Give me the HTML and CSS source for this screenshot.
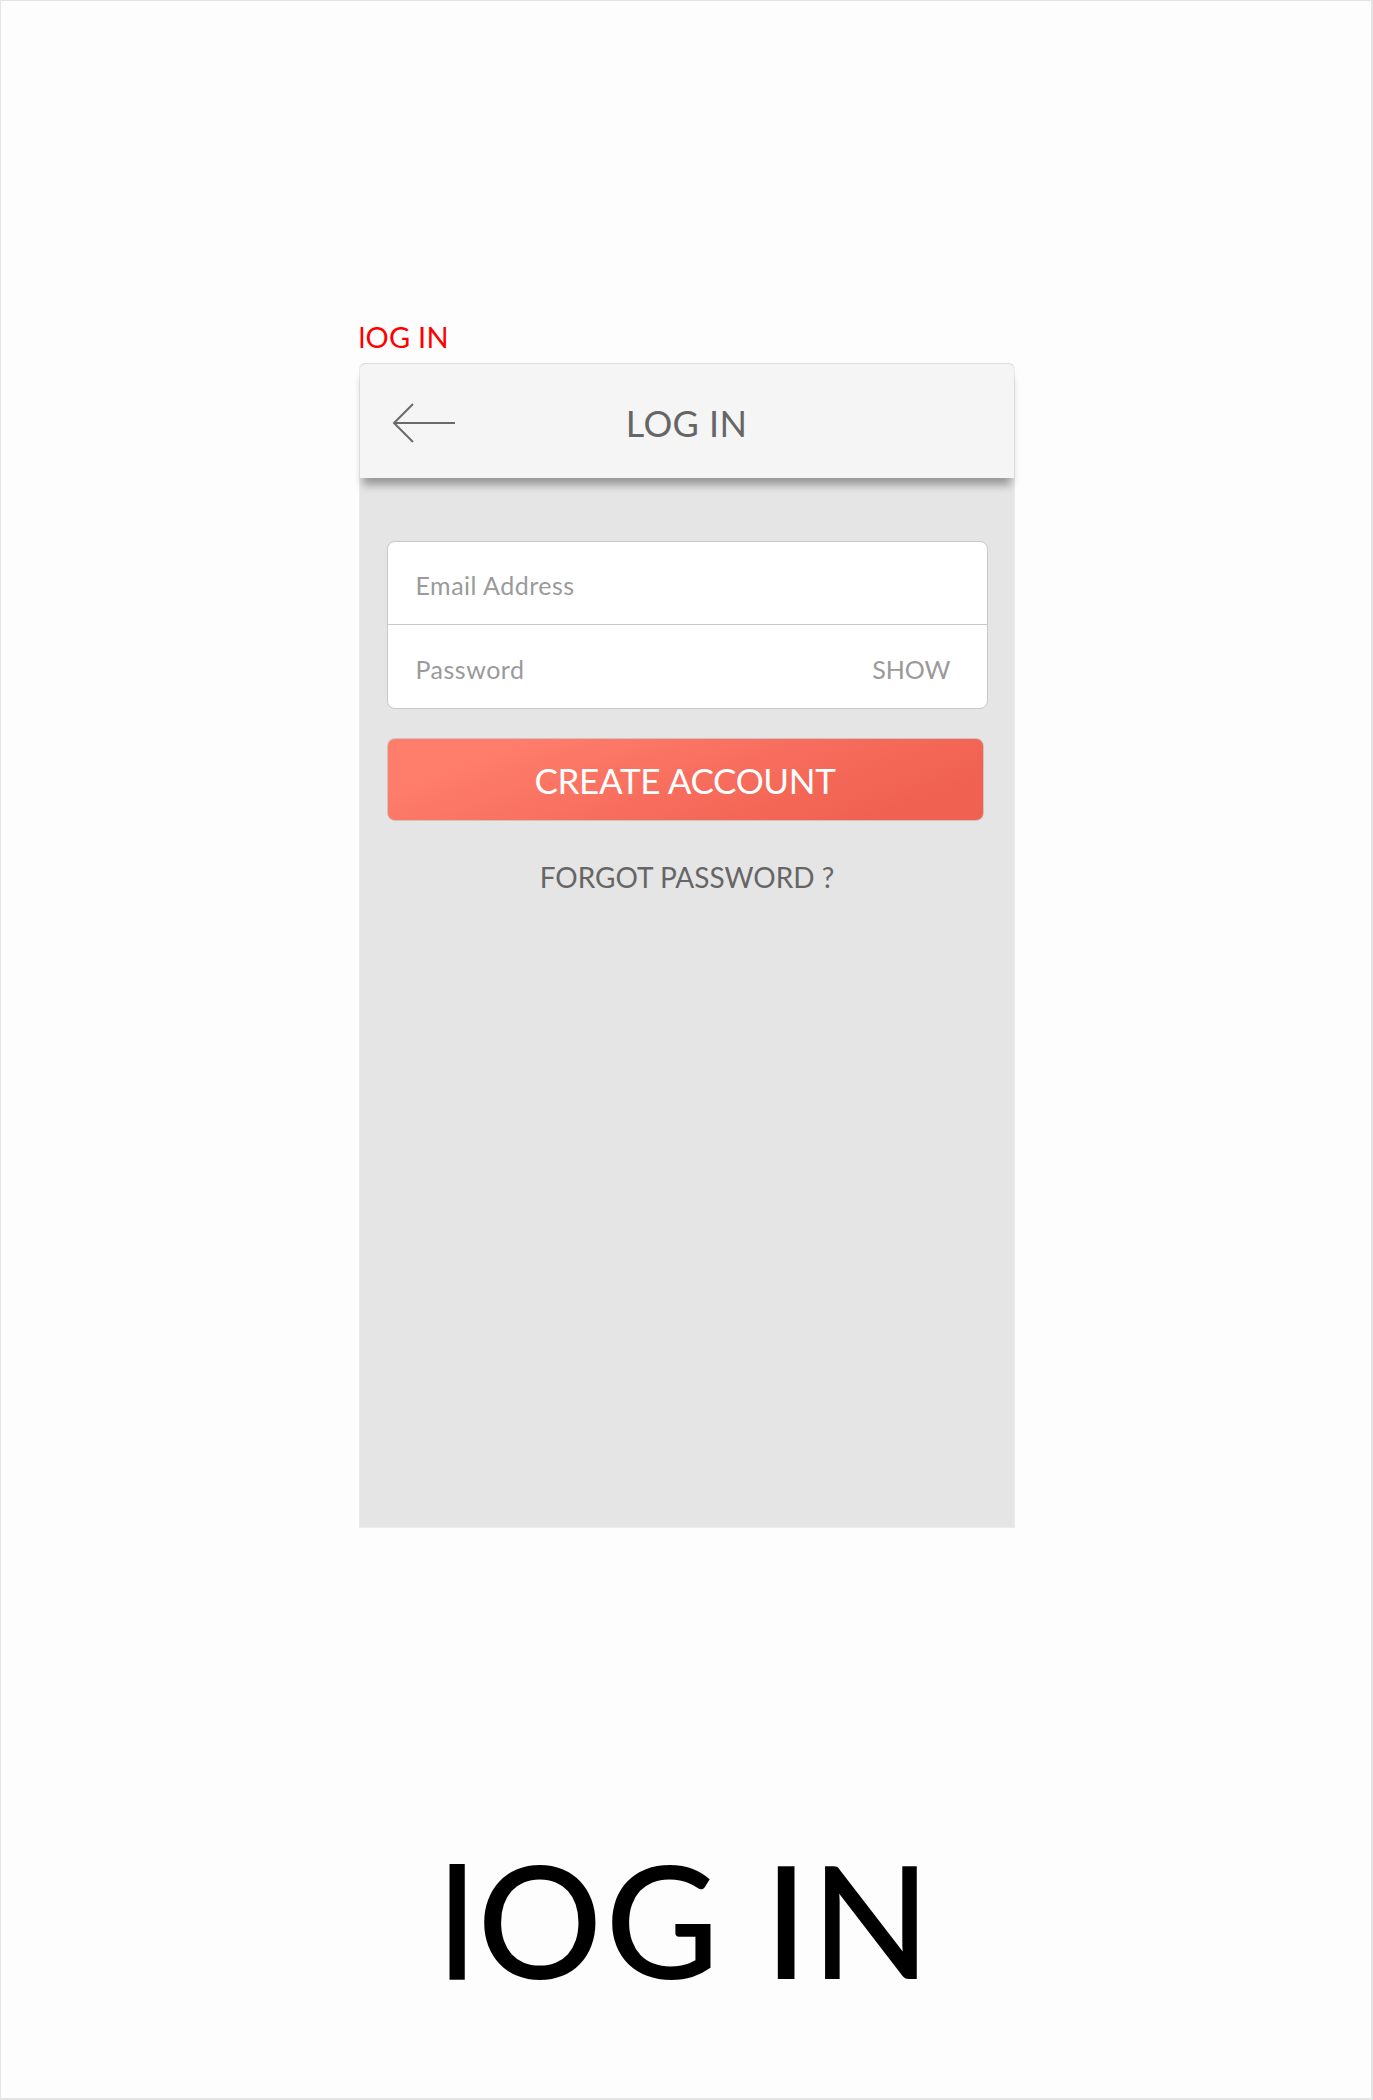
FILE: index.html
```html
<!DOCTYPE html>
<html lang="en">
<head>
<meta charset="utf-8">
<title>Log In</title>
<link rel="stylesheet" href="styles.css">
</head>
<body>
<div class="frame">
  <div class="screen-wrap">
    <div class="screen-label">lOG IN</div>
    <div class="card">
      <div class="topbar">
        <div class="back">
          <svg width="66" height="42" viewBox="0 0 66 42" aria-hidden="true">
            <path d="M2 21 H63" stroke="#6a6a6a" stroke-width="2" fill="none"/>
            <path d="M21 2 L2 21 L21 40" stroke="#6a6a6a" stroke-width="2" fill="none" stroke-linejoin="miter"/>
          </svg>
        </div>
        <div class="title">LOG IN</div>
        <div class="spacer"></div>
      </div>
      <div class="content">
        <div class="fields">
          <div class="field">Email Address</div>
          <div class="field field-pass"><span>Password</span><span class="show">SHOW</span></div>
        </div>
        <div class="cta">CREATE ACCOUNT</div>
        <div class="forgot">FORGOT PASSWORD ?</div>
      </div>
    </div>
  </div>
  <div class="big-title">lOG IN</div>
</div>
</body>
</html>
```
FILE: styles.css
```css
html, body {
  margin: 0;
  padding: 0;
  background: #ffffff;
}
body {
  font-family: Lato, "Open Sans", sans-serif;
}
.frame {
  width: 1373px;
  height: 2100px;
  box-sizing: border-box;
  border: 1px solid #e4e4e4;
  border-right-width: 2px;
  border-bottom-width: 2px;
  background: #fdfdfd;
  display: flex;
  flex-direction: column;
  align-items: center;
}
.screen-wrap {
  width: 656px;
  margin-top: 321px;
  margin-left: 1px;
}
.screen-label {
  color: #ff0000;
  font-size: 29px;
  line-height: 29px;
  height: 29px;
  margin-bottom: 12px;
  letter-spacing: 0.3px;
}
.card {
  height: 1165px;
  box-sizing: border-box;
  background: #e5e5e5;
  border: 1px solid #ebebeb;
  border-top-color: #dedede;
  border-radius: 6px 6px 0 0;
  display: flex;
  flex-direction: column;
}
.topbar {
  height: 114px;
  flex: none;
  background: #f5f5f5;
  border-radius: 6px 6px 0 0;
  display: grid;
  grid-template-columns: 1fr auto 1fr;
  align-items: center;
  position: relative;
  z-index: 1;
  box-shadow: 0 10px 8px -3px rgba(0, 0, 0, 0.34);
}
.back {
  padding-left: 32px;
  padding-top: 4px;
  display: flex;
}
.title {
  color: #666666;
  font-size: 36px;
  line-height: 36px;
  padding-top: 4px;
  letter-spacing: 0.4px;
}
.content {
  flex: 1;
  padding: 63px 26px 0 27px;
  display: flex;
  flex-direction: column;
}
.fields {
  background: #ffffff;
  border: 1px solid #c9c9c9;
  border-radius: 8px;
  height: 168px;
  box-sizing: border-box;
  display: flex;
  flex-direction: column;
}
.field {
  flex: 1;
  display: flex;
  align-items: center;
  justify-content: space-between;
  padding: 5px 36px 0 28px;
  color: #9a9a9a;
  font-size: 25px;
  line-height: 25px;
  letter-spacing: 0.5px;
}
.field + .field {
  border-top: 1px solid #c9c9c9;
  padding-top: 6px;
}
.show {
  color: #9a9a9a;
  letter-spacing: 0;
}
.cta {
  margin-top: 29px;
  margin-right: 4px;
  margin-left: 0;
  height: 83px;
  box-sizing: border-box;
  border: 1px solid #cfc4c2;
  border-radius: 8px;
  background: linear-gradient(160deg, #ff7e6b 15%, #f76c5c 55%, #f06151 85%);
  color: #ffffff;
  font-size: 35px;
  line-height: 35px;
  padding-top: 2px;
  display: flex;
  align-items: center;
  justify-content: center;
  letter-spacing: -0.3px;
}
.forgot {
  margin-top: 42px;
  text-align: center;
  color: #666666;
  font-size: 28px;
  line-height: 28px;
  letter-spacing: 0;
}
.big-title {
  margin-top: 313px;
  color: #000000;
  font-size: 156px;
  line-height: 156px;
  letter-spacing: 2.8px;
  font-weight: 500;
}
```
